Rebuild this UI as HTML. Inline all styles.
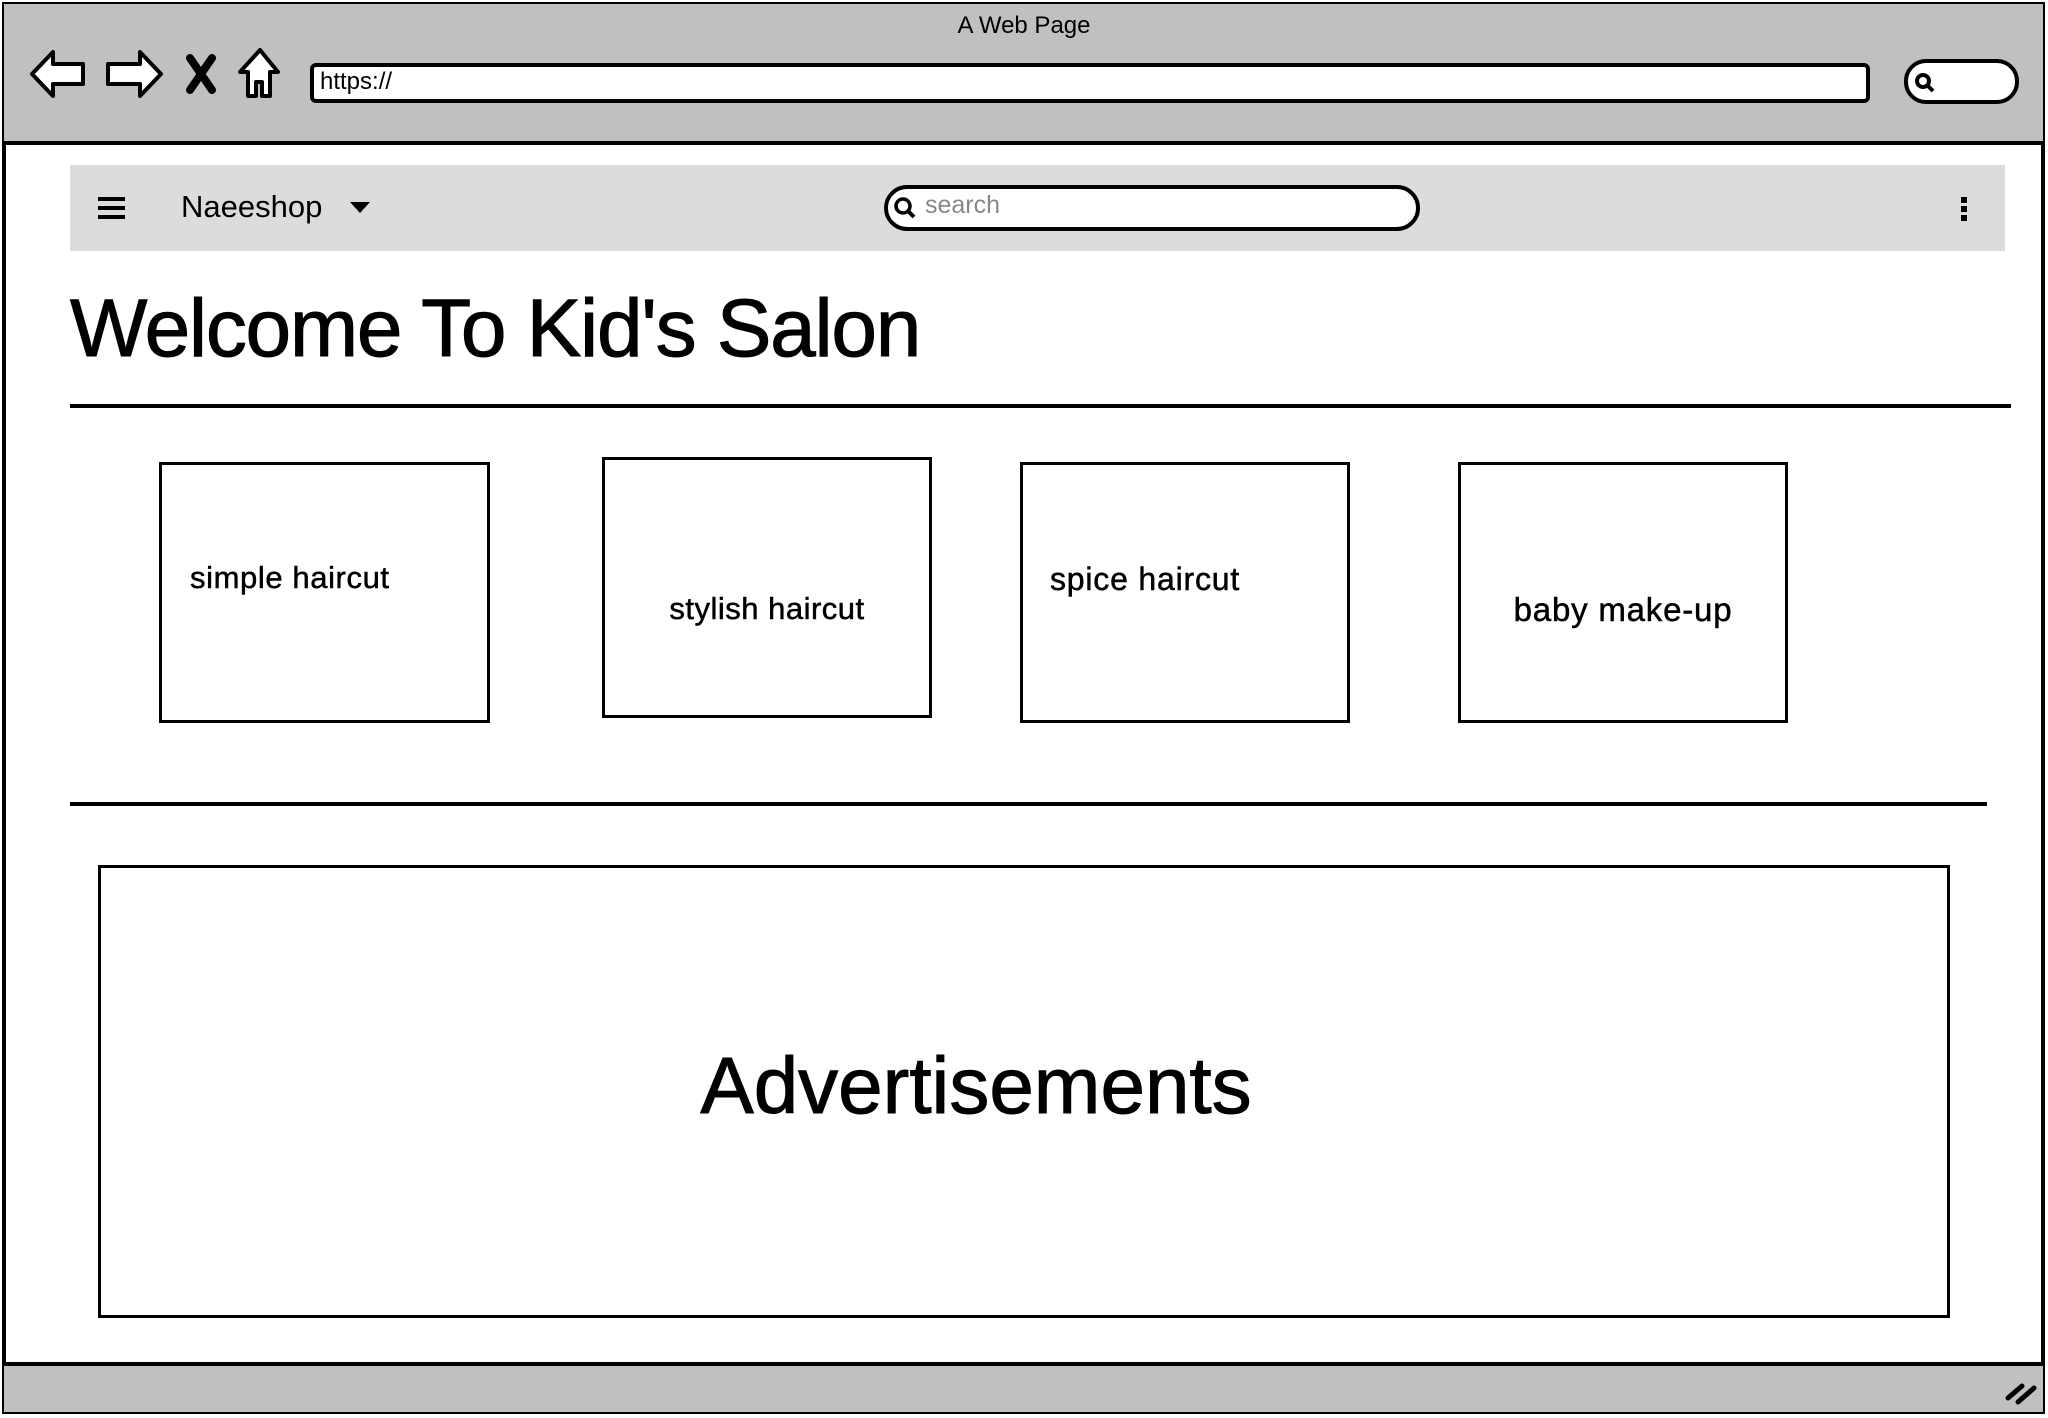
<!DOCTYPE html>
<html><head><meta charset="utf-8"><style>
*{margin:0;padding:0;box-sizing:border-box}
body{width:2048px;height:1418px;background:#fff;position:relative;overflow:hidden;font-family:"Liberation Sans",sans-serif;color:#000}
.a{position:absolute}
.box{position:absolute;border:3.5px solid #000;background:#fff}
.t{position:absolute;white-space:nowrap}
</style></head><body>
<div class="a" style="left:2px;top:2px;width:2043px;height:1412px;border:4px solid #000;"></div>
<div class="a" style="left:4px;top:4px;width:2039px;height:141px;background:#c0c0c0;border-bottom:4px solid #000"></div>
<div class="a" style="left:4px;top:1362px;width:2039px;height:50px;background:#c0c0c0;border-top:4px solid #000"></div>
<div class="t" style="left:0;width:2048px;text-align:center;top:12px;font-size:24px">A Web Page</div>
<svg class="a" style="left:28px;top:44px" width="270" height="60" viewBox="0 0 270 60">
<g fill="#fff" stroke="#000" stroke-width="4" stroke-linejoin="round">
<path d="M4 30 L25 8 L25 20 L55 20 L55 40 L25 40 L25 52 Z"/>
<path d="M133 30 L112 8 L112 20 L80 20 L80 40 L112 40 L112 52 Z"/>
<path d="M232 6 L250 28 L242 28 L242 52 L234 52 L234 38 L228 38 L228 52 L220 52 L220 28 L212 28 Z"/>
</g>
<path d="M162 14 L184 46 M184 14 L162 46" stroke="#000" stroke-width="8" stroke-linecap="round"/>
</svg>
<div class="a" style="left:310px;top:63px;width:1560px;height:40px;background:#fff;border:4px solid #000;border-radius:6px"></div>
<div class="t" style="left:320px;top:68px;font-size:24px">https://</div>
<div class="a" style="left:1904px;top:59px;width:115px;height:45px;background:#fff;border:4px solid #000;border-radius:22px"></div>
<svg class="a" style="left:1912px;top:70px" width="26" height="26"><circle cx="11" cy="11" r="6" fill="none" stroke="#000" stroke-width="4"/><path d="M15 15 L21 21" stroke="#000" stroke-width="4"/></svg>
<svg class="a" style="left:2004px;top:1376px" width="36" height="30"><path d="M4 22 L18 10 M14 26 L30 12" stroke="#000" stroke-width="5" stroke-linecap="round"/></svg>

<div class="a" style="left:70px;top:165px;width:1935px;height:86px;background:#dcdcdc"></div>
<div class="a" style="left:98px;top:197px;width:27px;height:4px;background:#000"></div>
<div class="a" style="left:98px;top:206px;width:27px;height:4px;background:#000"></div>
<div class="a" style="left:98px;top:215px;width:27px;height:4px;background:#000"></div>
<div class="t" style="left:181px;top:189px;font-size:31px">Naeeshop</div>
<svg class="a" style="left:350px;top:202px" width="20" height="12"><path d="M0 0 L20 0 L10 11Z"/></svg>
<div class="a" style="left:884px;top:185px;width:536px;height:46px;background:#fff;border:4px solid #000;border-radius:23px"></div>
<svg class="a" style="left:893px;top:196px" width="24" height="24"><circle cx="10" cy="10" r="7" fill="none" stroke="#000" stroke-width="3.5"/><path d="M15 15 L21 21" stroke="#000" stroke-width="4"/></svg>
<div class="t" style="left:925px;top:191px;font-size:25px;color:#888">search</div>
<div class="a" style="left:1961px;top:197px;width:6px;height:6px;background:#000"></div>
<div class="a" style="left:1961px;top:206px;width:6px;height:6px;background:#000"></div>
<div class="a" style="left:1961px;top:215px;width:6px;height:6px;background:#000"></div>

<div class="t" style="left:70px;top:282px;font-size:82px;letter-spacing:-1.3px;-webkit-text-stroke:1px #000">Welcome To Kid's Salon</div>
<div class="a" style="left:70px;top:404px;width:1941px;height:4px;background:#000"></div>

<div class="box" style="left:159px;top:462px;width:331px;height:261px"></div>
<div class="box" style="left:602px;top:457px;width:330px;height:261px"></div>
<div class="box" style="left:1020px;top:462px;width:330px;height:261px"></div>
<div class="box" style="left:1458px;top:462px;width:330px;height:261px"></div>
<div class="t" style="left:190px;top:560px;font-size:31px;letter-spacing:0.6px;-webkit-text-stroke:0.5px #000">simple haircut</div>
<div class="t" style="left:602px;width:330px;text-align:center;top:591px;font-size:31px;letter-spacing:0.5px;-webkit-text-stroke:0.5px #000">stylish haircut</div>
<div class="t" style="left:1050px;top:561px;font-size:32px;letter-spacing:0.8px;-webkit-text-stroke:0.5px #000">spice haircut</div>
<div class="t" style="left:1458px;width:330px;text-align:center;top:591px;font-size:33px;letter-spacing:0.8px;-webkit-text-stroke:0.5px #000">baby make-up</div>

<div class="a" style="left:70px;top:802px;width:1917px;height:4px;background:#000"></div>
<div class="box" style="left:98px;top:865px;width:1852px;height:453px"></div>
<div class="t" style="left:98px;width:1756px;text-align:center;top:1040px;font-size:80px;-webkit-text-stroke:1px #000">Advertisements</div>
</body></html>
